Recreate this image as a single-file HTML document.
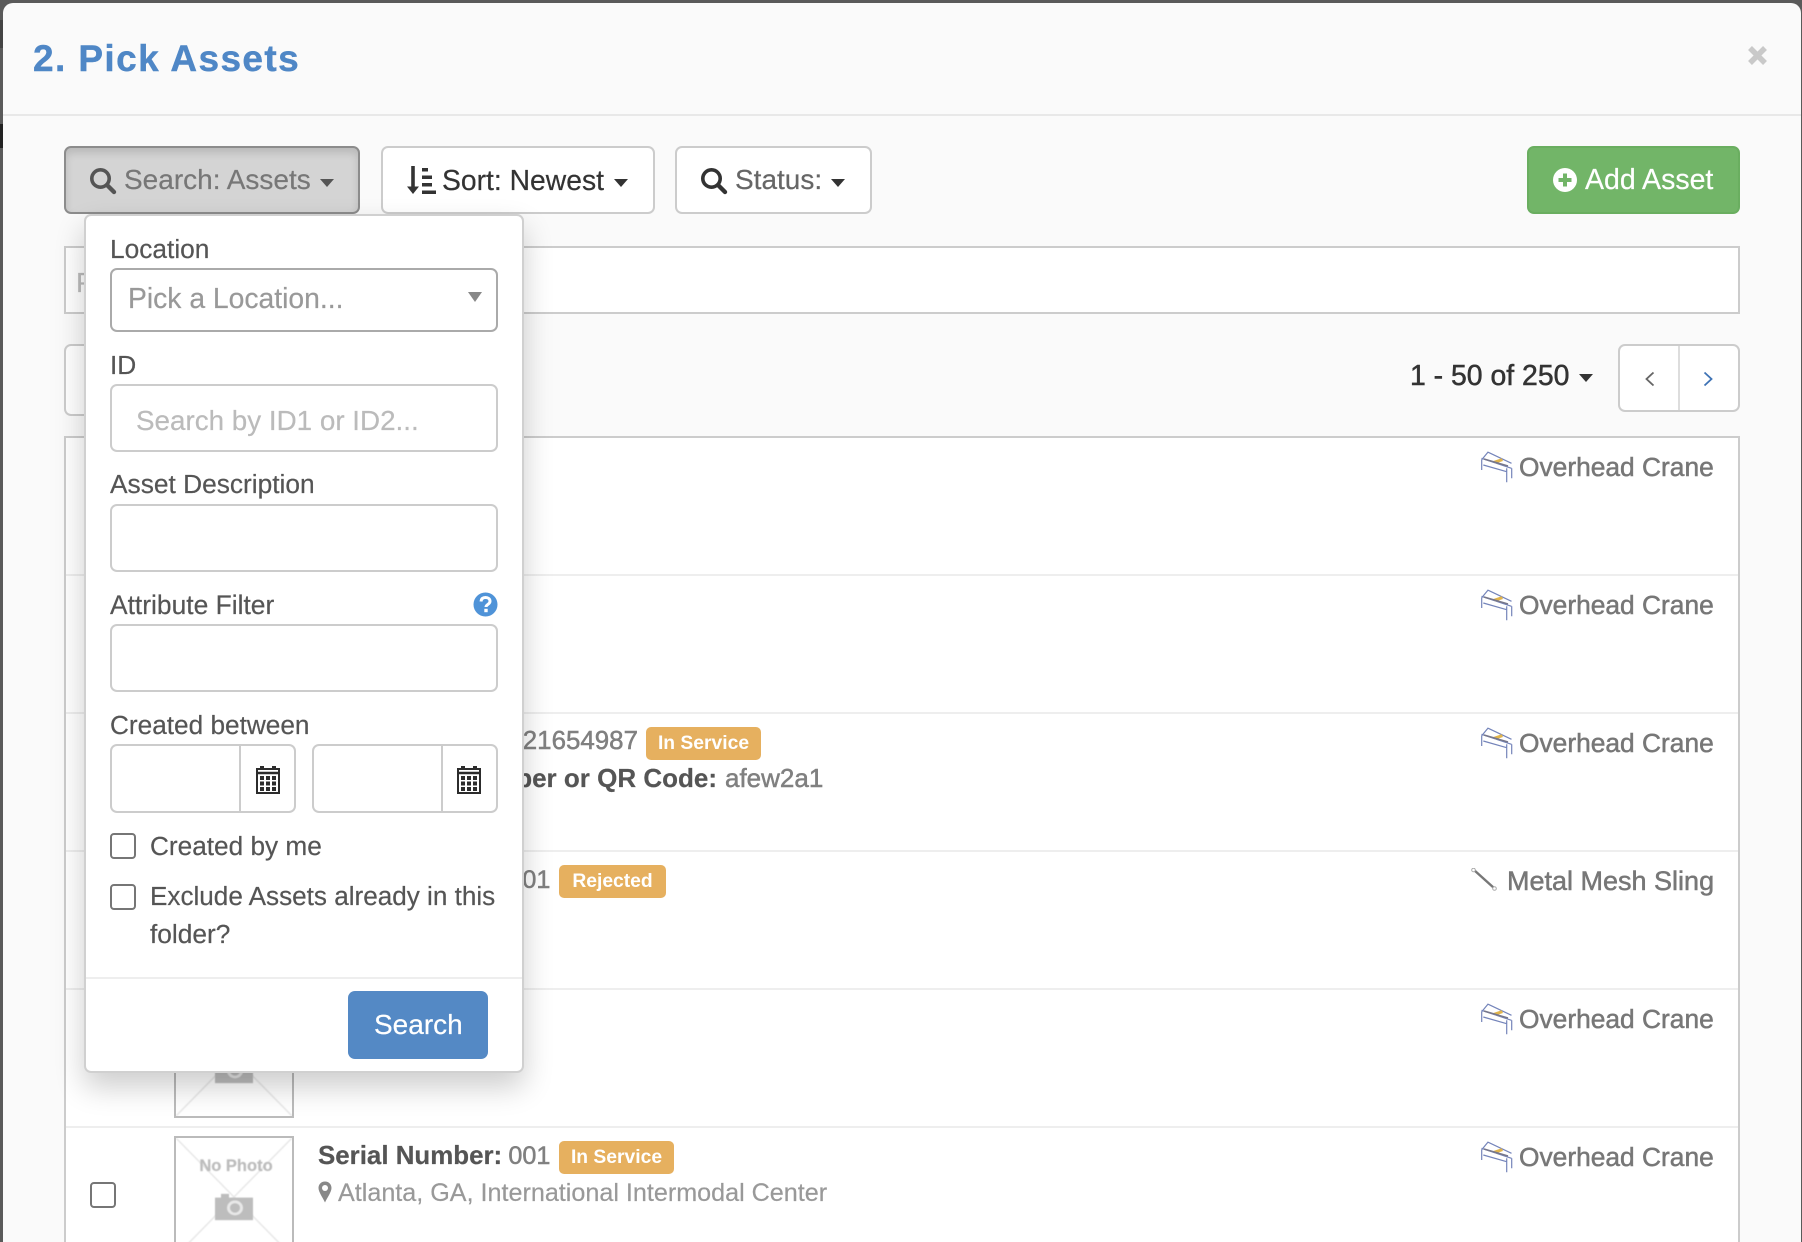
<!DOCTYPE html>
<html><head><meta charset="utf-8"><title>Pick Assets</title>
<style>
*{box-sizing:border-box}
html,body{margin:0;padding:0;width:1802px;height:1242px;overflow:hidden;background:#5a5a5a}
body{position:relative;font-family:"Liberation Sans",Arial,sans-serif}
.a{position:absolute}
.t{position:absolute;white-space:nowrap;line-height:40px;height:40px;-webkit-text-stroke:.2px currentColor}
.m{-webkit-text-stroke:.5px currentColor}
.box{position:absolute;background:#fff;border:2px solid #ccc;border-radius:7px}
.caret{position:absolute;width:0;height:0;border-left:7.5px solid transparent;border-right:7.5px solid transparent;border-top:8px solid #333}
.sep{position:absolute;left:66px;width:1672px;height:2px;background:#eee}
.badge{position:absolute;height:33px;line-height:33px;background:#e6b05f;color:#fff;font-weight:bold;font-size:19.3px;text-align:center;border-radius:5px}
svg{position:absolute;display:block}
.ph{position:absolute;width:120px;background:#fff;border:2px solid #bbb;overflow:hidden}
.v{color:#808080;margin-left:-1px;-webkit-text-stroke:.5px #808080}
.s{font-size:25.2px}
</style></head><body>
<!-- backdrop strip -->
<div class="a" style="left:0;top:20px;width:4px;height:28px;background:#444"></div>
<div class="a" style="left:0;top:124px;width:4px;height:24px;background:#222"></div>
<!-- modal -->
<div class="a" style="left:3px;top:3px;width:1798px;height:1239px;background:#fafafa;border-radius:10px 10px 0 0"></div>
<div class="t" style="left:33px;top:39px;font-size:37px;font-weight:bold;color:#4f87c6;letter-spacing:1.4px;-webkit-text-stroke:.4px #4f87c6">2. Pick Assets</div>
<svg style="left:1747px;top:45px" width="21" height="21" viewBox="0 0 21 21"><path d="M3 3L18 18M18 3L3 18" stroke="#c9c9c9" stroke-width="5.5"/></svg>
<div class="a" style="left:3px;top:114px;width:1798px;height:2px;background:#e8e8e8"></div>

<!-- toolbar -->
<div class="a" style="left:64px;top:146px;width:296px;height:68px;background:#d4d4d4;border:2px solid #8c8c8c;border-radius:7px;box-shadow:inset 0 5px 8px rgba(0,0,0,.125)"></div>
<svg style="left:89px;top:167px" width="28" height="28" viewBox="0 0 28 28"><circle cx="11.5" cy="11.5" r="8.7" fill="none" stroke="#555" stroke-width="3.6"/><path d="M18 18L25 25" stroke="#555" stroke-width="4.4" stroke-linecap="round"/></svg>
<div class="t" style="left:124px;top:160px;font-size:28px;color:#777">Search: Assets</div>
<div class="caret" style="left:320px;top:179px;border-top-color:#555"></div>

<div class="box" style="left:381px;top:146px;width:274px;height:68px"></div>
<svg style="left:406px;top:165px" width="30" height="30" viewBox="0 0 30 30"><path d="M7 1V23" stroke="#333" stroke-width="3.6"/><path d="M1 21.500H13L7 29Z" fill="#333"/><path d="M16 3h6v3.500h-6zM16 10.500h10v3.500H16zM16 18h10v3.500H16zM16 25.500h14v3.500H16z" fill="#333"/></svg>
<div class="t" style="left:442px;top:160px;font-size:28.3px;color:#333">Sort: Newest</div>
<div class="caret" style="left:614px;top:179px"></div>

<div class="box" style="left:675px;top:146px;width:197px;height:68px"></div>
<svg style="left:700px;top:167px" width="28" height="28" viewBox="0 0 28 28"><circle cx="11.5" cy="11.500" r="8.700" fill="none" stroke="#333" stroke-width="3.6"/><path d="M18 18L25 25" stroke="#333" stroke-width="4.400" stroke-linecap="round"/></svg>
<div class="t" style="left:735px;top:160px;font-size:28px;color:#666">Status:</div>
<div class="caret" style="left:831px;top:179px"></div>

<div class="a" style="left:1527px;top:146px;width:213px;height:68px;background:#72b568;border-radius:7px;border:2px solid #6aae60"></div>
<svg style="left:1553px;top:168px" width="24" height="24" viewBox="0 0 24 24"><circle cx="12" cy="12" r="12" fill="#fff"/><path d="M12 5.500V18.500M5.500 12H18.500" stroke="#72b568" stroke-width="4"/></svg>
<div class="t" style="left:1585px;top:160px;font-size:28.5px;color:#fff">Add Asset</div>

<!-- search strip -->
<div class="a" style="left:64px;top:246px;width:1676px;height:68px;background:#fff;border:2px solid #ccc"></div>
<div class="t" style="left:76px;top:263px;font-size:28px;color:#bbb">P</div>

<!-- pagination row -->
<div class="box" style="left:64px;top:344px;width:60px;height:72px"></div>
<div class="t m" style="left:1410px;top:356px;font-size:28.4px;color:#333">1 - 50 of 250</div>
<div class="caret" style="left:1579px;top:374px"></div>
<div class="box" style="left:1618px;top:344px;width:122px;height:68px"></div>
<div class="a" style="left:1678px;top:346px;width:2px;height:64px;background:#ddd"></div>
<svg style="left:1644px;top:371px" width="12" height="16" viewBox="0 0 12 16"><path d="M9.500 1.500L2.500 8L9.500 14.500" fill="none" stroke="#666" stroke-width="1.800"/></svg>
<svg style="left:1702px;top:371px" width="12" height="16" viewBox="0 0 12 16"><path d="M2.500 1.500L9.500 8L2.500 14.500" fill="none" stroke="#3f73b5" stroke-width="1.800"/></svg>

<!-- list -->
<div class="a" style="left:64px;top:436px;width:1676px;height:806px;background:#fff;border:2px solid #ccc;border-bottom:0"></div>
<div class="sep" style="top:574px"></div>
<div class="sep" style="top:712px"></div>
<div class="sep" style="top:850px"></div>
<div class="sep" style="top:988px"></div>
<div class="sep" style="top:1126px"></div>

<!-- right labels -->
<svg style="left:1481px;top:451px" width="32" height="32" viewBox="0 0 32 32"><g fill="none" stroke="#7484ba" stroke-width="1.200"><path d="M7.300 .7L0.500 9M.7 9V19M.5 7.300L30.500 17.300M2.300 14L25.700 20.700M25.700 17.300V31.300M30.700 17.300V27.300M7.300 1.300L30.500 12.300"/></g><path d="M12.300 10L20.700 7.300L22 10L14.500 12.500Z" fill="#e2b54c"/><path d="M3 8L27 15" stroke="#77778a" stroke-width="1.500"/></svg>
<div class="t m" style="left:1519px;top:447px;font-size:26.35px;color:#777">Overhead Crane</div>
<svg style="left:1481px;top:589px" width="32" height="32" viewBox="0 0 32 32"><g fill="none" stroke="#7484ba" stroke-width="1.200"><path d="M7.300 .7L0.500 9M.7 9V19M.5 7.300L30.500 17.300M2.300 14L25.700 20.700M25.700 17.300V31.300M30.700 17.300V27.300M7.300 1.300L30.500 12.300"/></g><path d="M12.300 10L20.700 7.300L22 10L14.500 12.500Z" fill="#e2b54c"/><path d="M3 8L27 15" stroke="#77778a" stroke-width="1.500"/></svg>
<div class="t m" style="left:1519px;top:585px;font-size:26.35px;color:#777">Overhead Crane</div>
<svg style="left:1481px;top:727px" width="32" height="32" viewBox="0 0 32 32"><g fill="none" stroke="#7484ba" stroke-width="1.200"><path d="M7.300 .7L0.500 9M.7 9V19M.5 7.300L30.500 17.300M2.300 14L25.700 20.700M25.700 17.300V31.300M30.700 17.300V27.300M7.300 1.300L30.500 12.300"/></g><path d="M12.300 10L20.700 7.300L22 10L14.500 12.500Z" fill="#e2b54c"/><path d="M3 8L27 15" stroke="#77778a" stroke-width="1.500"/></svg>
<div class="t m" style="left:1519px;top:723px;font-size:26.35px;color:#777">Overhead Crane</div>
<svg style="left:1471px;top:868px" width="26" height="23" viewBox="0 0 26 23"><path d="M3 2L23 20" stroke="#777" stroke-width="2.400"/><circle cx="2.500" cy="2" r="1.800" fill="#fff" stroke="#aaa"/><circle cx="23.500" cy="20.500" r="1.800" fill="#fff" stroke="#aaa"/></svg>
<div class="t m" style="left:1507px;top:861px;font-size:27px;color:#777">Metal Mesh Sling</div>
<svg style="left:1481px;top:1003px" width="32" height="32" viewBox="0 0 32 32"><g fill="none" stroke="#7484ba" stroke-width="1.200"><path d="M7.300 .7L0.500 9M.7 9V19M.5 7.300L30.500 17.300M2.300 14L25.700 20.700M25.700 17.300V31.300M30.700 17.300V27.300M7.300 1.300L30.500 12.300"/></g><path d="M12.300 10L20.700 7.300L22 10L14.500 12.500Z" fill="#e2b54c"/><path d="M3 8L27 15" stroke="#77778a" stroke-width="1.500"/></svg>
<div class="t m" style="left:1519px;top:999px;font-size:26.35px;color:#777">Overhead Crane</div>
<svg style="left:1481px;top:1141px" width="32" height="32" viewBox="0 0 32 32"><g fill="none" stroke="#7484ba" stroke-width="1.200"><path d="M7.300 .7L0.500 9M.7 9V19M.5 7.300L30.500 17.300M2.300 14L25.700 20.700M25.700 17.300V31.300M30.700 17.300V27.300M7.300 1.300L30.500 12.300"/></g><path d="M12.300 10L20.700 7.300L22 10L14.500 12.500Z" fill="#e2b54c"/><path d="M3 8L27 15" stroke="#77778a" stroke-width="1.500"/></svg>
<div class="t m" style="left:1519px;top:1137px;font-size:26.35px;color:#777">Overhead Crane</div>

<!-- row 3 -->
<div class="t" style="left:318px;top:721px;font-size:25.9px;color:#555"><b>Serial Number:</b> <span class="v">321654987</span></div>
<div class="badge" style="left:646px;top:727px;width:115px">In Service</div>
<div class="t" style="right:1085px;top:758px;font-size:26px;font-weight:bold;color:#555">Tag Number or QR Code:</div>
<div class="t m" style="left:725px;top:758px;font-size:26px;color:#808080">afew2a1</div>
<!-- row 4 -->
<div class="t" style="left:318px;top:860px;font-size:25.9px;color:#555"><b>Serial Number:</b> <span class="v s">001</span></div>
<div class="badge" style="left:559px;top:865px;width:107px">Rejected</div>
<!-- row 5 thumb -->
<div class="ph" style="left:174px;top:996px;height:122px"><svg width="116" height="118" style="left:0;top:0;filter:blur(.5px)"><path d="M0 0L116 118M116 0L0 118" stroke="#e8e8e8" stroke-width="1.500"/></svg>
<svg style="left:38px;top:56px;filter:blur(.5px)" width="40" height="30" viewBox="0 0 40 32" preserveAspectRatio="none"><path d="M1 7H7V3H15V7H39V31H1Z" fill="#bdbdbd"/><circle cx="21" cy="18" r="8" fill="#e8e8e8"/><circle cx="21" cy="18" r="5" fill="#bdbdbd"/></svg></div>
<!-- row 6 -->
<div class="a" style="left:90px;top:1182px;width:26px;height:26px;background:#fff;border:2px solid #767676;border-radius:4px"></div>
<div class="ph" style="left:174px;top:1136px;height:122px"><svg width="116" height="118" style="left:0;top:0;filter:blur(.5px)"><path d="M0 0L116 118M116 0L0 118" stroke="#e8e8e8" stroke-width="1.500"/></svg>
<div class="t" style="left:2px;width:116px;top:8px;text-align:center;font-size:16.5px;font-weight:bold;color:#bcbcbc;filter:blur(.5px)">No Photo</div>
<svg style="left:38px;top:53px;filter:blur(.5px)" width="40" height="30" viewBox="0 0 40 32" preserveAspectRatio="none"><path d="M1 7H7V3H15V7H39V31H1Z" fill="#bdbdbd"/><circle cx="21" cy="18" r="8" fill="#e8e8e8"/><circle cx="21" cy="18" r="5" fill="#bdbdbd"/></svg></div>
<div class="t" style="left:318px;top:1136px;font-size:25.9px;color:#555"><b>Serial Number:</b> <span class="v s">001</span></div>
<div class="badge" style="left:559px;top:1141px;width:115px">In Service</div>
<svg style="left:318px;top:1181px" width="14" height="22" viewBox="0 0 14 22"><path d="M7 0.500C3 .500 .500 3.500 .500 7C.500 11 5 17 7 21.500C9 17 13.500 11 13.500 7C13.500 3.500 11 .500 7 .500Z" fill="#888"/><circle cx="7" cy="7" r="3" fill="#fff"/></svg>
<div class="t" style="left:338px;top:1173px;font-size:25.15px;color:#999">Atlanta, GA, International Intermodal Center</div>

<!-- dropdown -->
<div class="a" style="left:84px;top:214px;width:440px;height:859px;background:#fff;border:2px solid #d0d0d0;border-radius:7px;box-shadow:0 14px 30px rgba(0,0,0,.2)"></div>
<div class="t" style="left:110px;top:229px;font-size:26.3px;color:#555">Location</div>
<div class="box" style="left:110px;top:268px;width:388px;height:64px;border-color:#aaa"></div>
<div class="t" style="left:128px;top:278px;font-size:28.3px;color:#999">Pick a Location...</div>
<div class="a" style="left:468px;top:292px;width:0;height:0;border-left:7.5px solid transparent;border-right:7.5px solid transparent;border-top:10px solid #888"></div>
<div class="t" style="left:110px;top:345px;font-size:26.3px;color:#555">ID</div>
<div class="box" style="left:110px;top:384px;width:388px;height:68px"></div>
<div class="t" style="left:136px;top:401px;font-size:27.8px;color:#bbb">Search by ID1 or ID2...</div>
<div class="t" style="left:110px;top:464px;font-size:26.3px;color:#555">Asset Description</div>
<div class="box" style="left:110px;top:504px;width:388px;height:68px"></div>
<div class="t" style="left:110px;top:585px;font-size:26.4px;color:#555">Attribute Filter</div>
<svg style="left:473px;top:592px" width="25" height="25" viewBox="0 0 25 25"><circle cx="12.500" cy="12.500" r="12" fill="#4f93d8"/><path d="M8 9.500C8.300 6.800 10 5.500 12.500 5.500C15.200 5.500 17 7 17 9.200C17 12.500 13 12.300 13 15" fill="none" stroke="#fff" stroke-width="3"/><rect x="11.300" y="16.800" width="3.400" height="3.400" fill="#fff"/></svg>
<div class="box" style="left:110px;top:624px;width:388px;height:68px"></div>
<div class="t" style="left:110px;top:705px;font-size:26.2px;color:#555">Created between</div>
<div class="box" style="left:110px;top:744px;width:186px;height:69px"></div>
<div class="a" style="left:239px;top:746px;width:2px;height:65px;background:#ccc"></div>
<svg style="left:256px;top:766px" width="24" height="28" viewBox="0 0 24 28"><path d="M1 3H5V1H7V3H17V1H19V3H23V27H1Z" fill="#fff" stroke="#2c2c2c" stroke-width="2"/><path d="M1 7H23" stroke="#2c2c2c" stroke-width="2.500"/><path d="M4 10h4v4H4zM10 10h4v4h-4zM16 10h4v4h-4zM4 15.500h4v4H4zM10 15.500h4v4h-4zM16 15.500h4v4h-4zM4 21h4v4H4zM10 21h4v4h-4zM16 21h4v4h-4z" fill="#2c2c2c"/></svg>
<div class="box" style="left:312px;top:744px;width:186px;height:69px"></div>
<div class="a" style="left:441px;top:746px;width:2px;height:65px;background:#ccc"></div>
<svg style="left:457px;top:766px" width="24" height="28" viewBox="0 0 24 28"><path d="M1 3H5V1H7V3H17V1H19V3H23V27H1Z" fill="#fff" stroke="#2c2c2c" stroke-width="2"/><path d="M1 7H23" stroke="#2c2c2c" stroke-width="2.500"/><path d="M4 10h4v4H4zM10 10h4v4h-4zM16 10h4v4h-4zM4 15.500h4v4H4zM10 15.500h4v4h-4zM16 15.500h4v4h-4zM4 21h4v4H4zM10 21h4v4h-4zM16 21h4v4h-4z" fill="#2c2c2c"/></svg>
<div class="a" style="left:110px;top:833px;width:26px;height:26px;border:2px solid #767676;border-radius:4px;background:#fff"></div>
<div class="t" style="left:150px;top:826px;font-size:26.2px;color:#555">Created by me</div>
<div class="a" style="left:110px;top:884px;width:26px;height:26px;border:2px solid #767676;border-radius:4px;background:#fff"></div>
<div class="t" style="left:150px;top:876px;font-size:26.1px;color:#555">Exclude Assets already in this</div>
<div class="t" style="left:150px;top:914px;font-size:26.3px;color:#555">folder?</div>
<div class="a" style="left:86px;top:977px;width:436px;height:2px;background:#eee"></div>
<div class="a" style="left:348px;top:991px;width:140px;height:68px;background:#5489c5;border-radius:7px"></div>
<div class="t" style="left:374px;top:1005px;font-size:28px;color:#fff">Search</div>
</body></html>
